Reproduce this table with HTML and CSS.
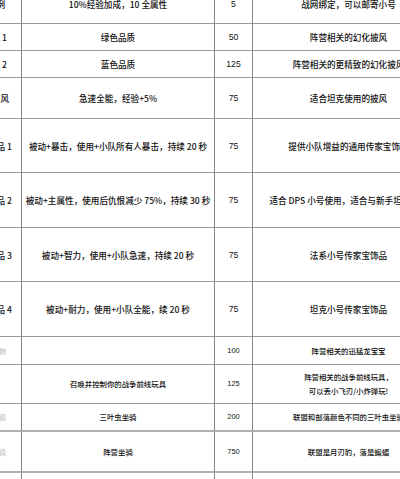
FILE: index.html
```html
<!DOCTYPE html>
<html lang="zh-CN">
<head>
<meta charset="utf-8">
<title>传家宝列表</title>
<link rel="stylesheet" href="styles.css">
</head>
<body>
<div class="tbl">
  <div class="c first p16">传家宝示例</div>
  <div class="c">10%经验加成，10 全属性</div>
  <div class="c num">5</div>
  <div class="c">战网绑定，可以邮寄小号</div>
  <div class="c last"></div>

  <div class="c first p14">幻化披风 1</div>
  <div class="c">绿色品质</div>
  <div class="c num">50</div>
  <div class="c">阵营相关的幻化披风</div>
  <div class="c last"></div>

  <div class="c first p14">幻化披风 2</div>
  <div class="c">蓝色品质</div>
  <div class="c num">125</div>
  <div class="c">阵营相关的更精致的幻化披风</div>
  <div class="c last"></div>

  <div class="c first p12">坦克披风</div>
  <div class="c">急速全能，经验+5%</div>
  <div class="c num">75</div>
  <div class="c">适合坦克使用的披风</div>
  <div class="c last"></div>

  <div class="c first p9">传家宝饰品 1</div>
  <div class="c">被动+暴击，使用+小队所有人暴击，持续 20 秒</div>
  <div class="c num">75</div>
  <div class="c">提供小队增益的通用传家宝饰品</div>
  <div class="c last"></div>

  <div class="c first p9">传家宝饰品 2</div>
  <div class="c">被动+主属性，使用后仇恨减少 75%，持续 30 秒</div>
  <div class="c num">75</div>
  <div class="c">适合 DPS 小号使用，适合与新手坦克组队</div>
  <div class="c last"></div>

  <div class="c first p9">传家宝饰品 3</div>
  <div class="c">被动+智力，使用+小队急速，持续 20 秒</div>
  <div class="c num">75</div>
  <div class="c">法系小号传家宝饰品</div>
  <div class="c last"></div>

  <div class="c first p9">传家宝饰品 4</div>
  <div class="c">被动+耐力，使用+小队全能，续 20 秒</div>
  <div class="c num">75</div>
  <div class="c">坦克小号传家宝饰品</div>
  <div class="c last"></div>

  <div class="c first faint sm">宠物</div>
  <div class="c sm"></div>
  <div class="c num sm">100</div>
  <div class="c sm">阵营相关的迅猛龙宝宝</div>
  <div class="c last"></div>

  <div class="c first sm"></div>
  <div class="c sm">召唤并控制你的战争前线玩具</div>
  <div class="c num sm">125</div>
  <div class="c sm">阵营相关的战争前线玩具，<br>可以丢小飞刃/小炸弹玩!</div>
  <div class="c last"></div>

  <div class="c first faint sm thick">坐骑</div>
  <div class="c sm thick">三叶虫坐骑</div>
  <div class="c num sm thick">200</div>
  <div class="c sm thick">联盟和部落颜色不同的三叶虫坐骑</div>
  <div class="c last thick"></div>

  <div class="c first faint sm thick">坐骑</div>
  <div class="c sm thick">阵营坐骑</div>
  <div class="c num sm thick">750</div>
  <div class="c sm thick">联盟是月刃豹，落是蝙蝠</div>
  <div class="c last thick"></div>

  <div class="c first sm"></div>
  <div class="c sm"></div>
  <div class="c num sm"></div>
  <div class="c sm"></div>
  <div class="c last"></div>
</div>
</body>
</html>
```
FILE: styles.css
```css
html, body {
  margin: 0;
  padding: 0;
  background: #ffffff;
  overflow: hidden;
}

body {
  font-family: "Noto Sans CJK SC", "Liberation Sans", sans-serif;
  color: #111111;
  width: 400px;
  height: 479px;
}

.tbl {
  display: grid;
  grid-template-columns: 82px 193px 38px 192px 100px;
  grid-template-rows: 40px 27px 27px 41px 54px 55px 54px 55px 28px 39px 28px 41px 40px;
  margin-left: -60px;
  margin-top: -16px;
  width: 605px;
}

.c {
  box-sizing: border-box;
  border-right: 1px solid #858585;
  border-bottom: 1px solid #9a9a9a;
  display: flex;
  align-items: center;
  justify-content: center;
  text-align: center;
  font-size: 8.6px;
  font-weight: 500;
  line-height: 14px;
  white-space: nowrap;
}

.c.last {
  border-right: none;
}

.first {
  justify-content: flex-end;
  text-align: right;
}

.p16 { padding-right: 16px; }
.p14 { padding-right: 14px; }
.p12 { padding-right: 12px; }
.p9 { padding-right: 9px; }

.num {
  font-family: "Liberation Sans", "Noto Sans CJK SC", sans-serif;
}

.sm {
  font-size: 7.4px;
}

.first.sm {
  padding-right: 15px;
}

.faint {
  color: #c4c4c4;
}

.thick {
  border-bottom: 2px solid #b0b0b0;
}
```
